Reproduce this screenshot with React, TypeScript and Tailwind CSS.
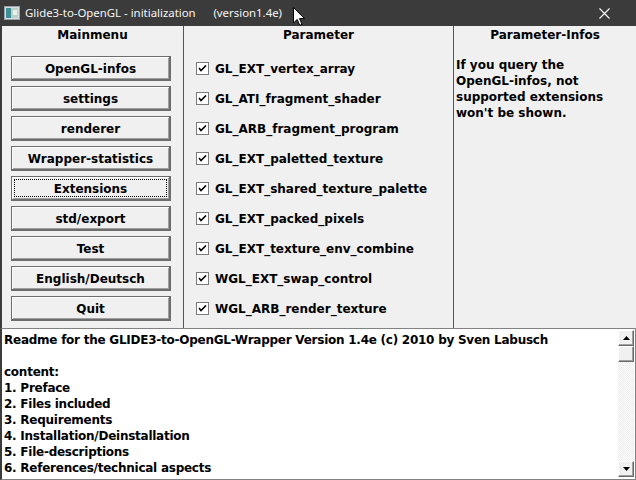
import React from 'react';

const menu = [
  'OpenGL-infos',
  'settings',
  'renderer',
  'Wrapper-statistics',
  'Extensions',
  'std/export',
  'Test',
  'English/Deutsch',
  'Quit',
];

const extensions = [
  'GL_EXT_vertex_array',
  'GL_ATI_fragment_shader',
  'GL_ARB_fragment_program',
  'GL_EXT_paletted_texture',
  'GL_EXT_shared_texture_palette',
  'GL_EXT_packed_pixels',
  'GL_EXT_texture_env_combine',
  'WGL_EXT_swap_control',
  'WGL_ARB_render_texture',
];

const readme = [
  'Readme for the GLIDE3-to-OpenGL-Wrapper Version 1.4e (c) 2010 by Sven Labusch',
  '',
  'content:',
  '1. Preface',
  '2. Files included',
  '3. Requirements',
  '4. Installation/Deinstallation',
  '5. File-descriptions',
  '6. References/technical aspects',
];

function Checkbox() {
  return (
    <span className="w-[13px] h-[13px] bg-white border border-[#7a7a7a] flex items-center justify-center flex-shrink-0">
      <svg width="9" height="9" viewBox="0 0 9 9">
        <path d="M1 4 L3 6.5 L8 1.5" stroke="#000" strokeWidth="1.6" fill="none" />
      </svg>
    </span>
  );
}

function ScrollButton({ down }: { down?: boolean }) {
  return (
    <div className="h-[16px] w-[16px] bg-[#f0f0f0] border border-t-white border-l-white border-r-[#696969] border-b-[#696969] shadow-[inset_-1px_-1px_0_#a0a0a0] flex items-center justify-center">
      <svg width="7" height="4" viewBox="0 0 7 4">
        <path d={down ? 'M0 0 H7 L3.5 4 Z' : 'M3.5 0 L7 4 H0 Z'} fill="#000" />
      </svg>
    </div>
  );
}

export default function App() {
  return (
    <div
      className="relative w-[636px] h-[480px] overflow-hidden bg-[#f0f0f0] flex flex-col text-black"
      style={{ fontFamily: '"DejaVu Sans", sans-serif' }}
    >
      {/* title bar */}
      <div className="h-[26px] bg-[#3b3b3b] flex items-center text-white flex-shrink-0">
        <svg width="16" height="14" viewBox="0 0 16 14" className="ml-[4px]">
          <rect x="0.5" y="0.5" width="15" height="13" fill="#d8dde2" stroke="#9aa3ab" />
          <rect x="2" y="2" width="5" height="10" fill="#3f8f9a" />
          <rect x="7" y="2" width="7" height="10" fill="#b7d3c8" />
          <rect x="9" y="4" width="4" height="5" fill="#e8efe9" />
        </svg>
        <span
          className="ml-[5px] text-[11.4px] whitespace-pre text-[#f5f5f5]"
          style={{ fontFamily: '"Noto Sans", "Open Sans", sans-serif' }}
        >
          {'Glide3-to-OpenGL - initialization      (version1.4e)'}
        </span>
        <div className="ml-auto mr-[26px] w-[12px] h-[12px] flex items-center justify-center">
          <svg width="11" height="11" viewBox="0 0 11 11">
            <path d="M0.5 0.5 L10.5 10.5 M10.5 0.5 L0.5 10.5" stroke="#fff" strokeWidth="1.1" />
          </svg>
        </div>
      </div>

      {/* mouse cursor */}
      <svg width="12" height="19" viewBox="0 0 12 19" className="absolute left-[293px] top-[7px]">
        <path d="M0.5 0.5 V16 L4.2 12.4 L6.8 18.3 L9 17.3 L6.5 11.6 H11.5 Z" fill="#fff" stroke="#000" strokeWidth="1" />
      </svg>

      {/* panels */}
      <div className="h-[302px] flex text-[12px] font-bold border-l-2 border-[#3b3b3b] flex-shrink-0">
        <div className="w-[182px] border-r border-[#555] flex flex-col">
          <div className="h-[16px] leading-4 text-center pt-[1px]">Mainmenu</div>
          <div className="mt-[14px] pl-[9px] flex flex-col gap-[5px]">
            {menu.map((m) => (
              <div
                key={m}
                className="w-[160px] h-[25px] border border-[#6d6d6d] border-b-2 border-r-2 bg-[#f0f0f0] shadow-[inset_1px_1px_0_#fff,inset_-1px_-1px_0_#a0a0a0] flex items-center justify-center p-[2px]"
              >
                <span
                  className={`w-full h-full flex items-center justify-center pt-[1px] ${
                    m === 'Extensions' ? 'outline outline-1 outline-dotted outline-black -outline-offset-1' : ''
                  }`}
                >
                  {m}
                </span>
              </div>
            ))}
          </div>
        </div>

        <div className="w-[270px] border-r border-[#555] flex flex-col">
          <div className="h-[16px] leading-4 text-center pt-[1px]">Parameter</div>
          <div className="mt-[14px] pl-[12px] flex flex-col gap-[5px]">
            {extensions.map((e) => (
              <div key={e} className="h-[25px] flex items-center gap-[6px]">
                <Checkbox />
                <span className="pt-[1px]">{e}</span>
              </div>
            ))}
          </div>
        </div>

        <div className="flex-1 flex flex-col">
          <div className="h-[16px] leading-4 text-center pt-[1px]">Parameter-Infos</div>
          <div className="mt-[14px] pl-[2px] leading-4 pt-[1px]">
            If you query the
            <br />
            OpenGL-infos, not
            <br />
            supported extensions
            <br />
            won't be shown.
          </div>
        </div>
      </div>

      {/* readme box */}
      <div className="flex-1 flex bg-white border border-[#828282] border-l-2 border-l-[#3b3b3b] min-h-0">
        <div className="flex-1 pl-[2px] pt-[3px] text-[12px] font-bold leading-4 tracking-[-0.25px] whitespace-pre">
          {readme.map((l, i) => (
            <div key={i} className="h-[16px]">
              {l}
            </div>
          ))}
        </div>
        <div className="w-[16px] mr-[1px] mt-[1px] mb-[2px] flex flex-col">
          <ScrollButton />
          <div className="h-[16px] w-[16px] bg-[#f0f0f0] border border-t-white border-l-white border-r-[#696969] border-b-[#696969] shadow-[inset_-1px_-1px_0_#a0a0a0]" />
          <div className="flex-1 bg-[repeating-conic-gradient(#ffffff_0_25%,#ececec_0_50%)] bg-[length:2px_2px]" />
          <ScrollButton down />
        </div>
      </div>
    </div>
  );
}
